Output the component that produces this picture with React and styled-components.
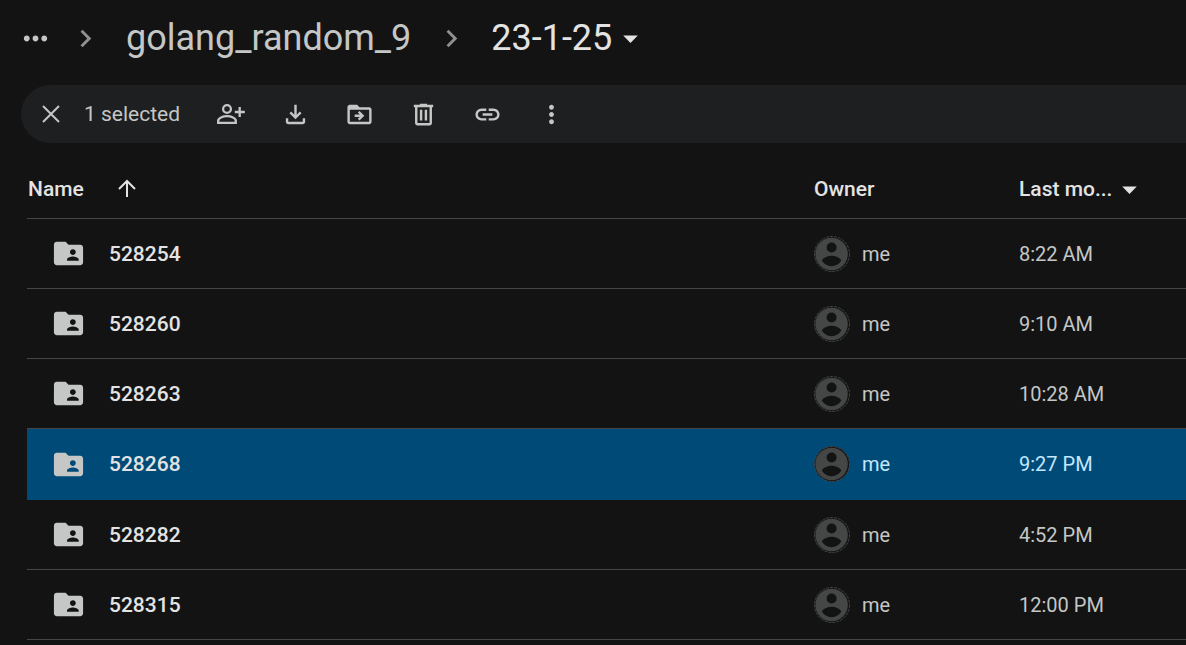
import React from 'react';
import styled, { createGlobalStyle } from 'styled-components';

const GlobalStyle = createGlobalStyle`
  *, *::before, *::after { box-sizing: border-box; }
  body {
    margin: 0;
    background: #131314;
    color: #c4c7c5;
    font-family: Roboto, "Liberation Sans", sans-serif;
  }
`;

const Page = styled.main`
  display: flex;
  flex-direction: column;
`;

const Breadcrumbs = styled.nav`
  display: flex;
  align-items: center;
  height: 76px;
  padding-left: 18px;
`;

const PlainButton = styled.button`
  display: inline-flex;
  align-items: center;
  padding: 0;
  border: 0;
  background: none;
  color: inherit;
  font: inherit;
  cursor: pointer;
`;

const MoreButton = styled(PlainButton)`
  margin-right: 15px;
`;

const Crumb = styled.a`
  padding: 0 23px;
  color: #c4c7c5;
  font-size: 36px;
  line-height: 44px;
  text-decoration: none;
`;

const CurrentCrumb = styled(PlainButton)`
  gap: 1px;
  padding-left: 22px;
  color: #e3e3e3;
  font-size: 36px;
  line-height: 44px;
`;

const Separator = styled.span`
  display: flex;
  color: #8e918f;
`;

const Toolbar = styled.section`
  display: flex;
  align-items: center;
  height: 58px;
  margin: 9px 0 0 21px;
  padding-left: 6px;
  border-radius: 29px 0 0 29px;
  background: #1e1f20;
`;

const ToolButton = styled(PlainButton)`
  justify-content: center;
  width: 48px;
  height: 48px;
  border-radius: 24px;
`;

const SelectionCount = styled.span`
  min-width: 98px;
  margin: 0 25px 0 9px;
  font-size: 21px;
  line-height: 28px;
`;

const Actions = styled.div`
  display: flex;
  gap: 16px;
`;

const TableArea = styled.section`
  margin: 17px 0 0 27px;
`;

const Table = styled.table`
  width: 100%;
  table-layout: fixed;
  border-spacing: 0;
`;

const HeadCell = styled.th`
  width: ${({ $width }) => $width || 'auto'};
  height: 59px;
  padding: 0;
  border-bottom: 1px solid #444746;
  color: #e3e3e3;
  font-size: 21px;
  font-weight: 500;
  line-height: 28px;
  text-align: left;
`;

const HeadContent = styled.div`
  display: flex;
  align-items: center;
  gap: 33px;
  padding-left: 1px;
`;

const Row = styled.tr`
  height: ${({ $selected }) => ($selected ? '71px' : '70px')};
  background: ${({ $selected }) => ($selected ? '#004a77' : 'transparent')};
  color: ${({ $selected }) => ($selected ? '#c2e7ff' : '#c4c7c5')};
`;

const Cell = styled.td`
  padding: 0;
  border-bottom: 1px solid ${({ $selected }) => ($selected ? '#004a77' : '#444746')};
  font-size: 20px;
  line-height: 28px;
`;

const NameContent = styled.div`
  display: flex;
  align-items: center;
  gap: 23px;
  padding-left: 24px;
  color: #c4c7c5;
`;

const FileName = styled.span`
  color: #e3e3e3;
  font-size: 21px;
  font-weight: 500;
`;

const OwnerContent = styled.div`
  display: flex;
  align-items: center;
  gap: 12px;
`;

const Svg = styled.svg`
  display: block;
  flex: none;
  width: ${({ $size }) => $size}px;
  height: ${({ $size }) => $size}px;
  fill: currentColor;
`;

const StrokeSvg = styled(Svg)`
  fill: none;
  stroke: currentColor;
  stroke-width: 2;
`;

const ICONS = {
  moreHoriz: 'M6 10c-1.1 0-2 .9-2 2s.9 2 2 2 2-.9 2-2-.9-2-2-2zm12 0c-1.1 0-2 .9-2 2s.9 2 2 2 2-.9 2-2-.9-2-2-2zm-6 0c-1.1 0-2 .9-2 2s.9 2 2 2 2-.9 2-2-.9-2-2-2z',
  moreVert: 'M12 8c1.1 0 2-.9 2-2s-.9-2-2-2-2 .9-2 2 .9 2 2 2zm0 2c-1.1 0-2 .9-2 2s.9 2 2 2 2-.9 2-2-.9-2-2-2zm0 6c-1.1 0-2 .9-2 2s.9 2 2 2 2-.9 2-2-.9-2-2-2z',
  chevron: 'M10 6L8.59 7.41 13.17 12l-4.58 4.59L10 18l6-6z',
  caret: 'M7 10l5 5 5-5z',
  download: 'M12 16l-5-5 1.4-1.45 2.6 2.6V4h2v8.15l2.6-2.6L17 11zm-6 4q-.825 0-1.4125-.5875Q4 18.825 4 18v-3h2v3h12v-3h2v3q0 .825-.5875 1.4125Q18.825 20 18 20z',
  move: 'M4 20q-.825 0-1.4-.6T2 18V6q0-.8.6-1.4T4 4h6l2 2h8q.8 0 1.4.6T22 8v10q0 .8-.6 1.4T20 20zM4 8v10h16V8zM12 17l4-4-4-4-1.4 1.4 1.6 1.6H8v2h4.2l-1.6 1.6z',
  trash: 'M7 21q-.825 0-1.4-.6T5 19V6H4V4h5V3h6v1h5v2h-1v13q0 .8-.6 1.4T17 21zM17 6H7v13h10zM9 17h2V8H9zm4 0h2V8h-2z',
  link: 'M11 17H7q-2.075 0-3.5375-1.4625Q2 14.075 2 12t1.4625-3.5375Q4.925 7 7 7h4v2H7q-1.25 0-2.125.875T4 12q0 1.25.875 2.125T7 15h4zm-3-4v-2h8v2zm5 4v-2h4q1.25 0 2.125-.875T20 12q0-1.25-.875-2.125T17 9h-4V7h4q2.075 0 3.5375 1.4625Q22 9.925 22 12t-1.4625 3.5375Q19.075 17 17 17z',
  sharedFolder: 'M20 6h-8l-2-2H4c-1.1 0-1.99.9-1.99 2L2 18c0 1.1.9 2 2 2h16c1.1 0 2-.9 2-2V8c0-1.1-.9-2-2-2zm-5 3c1.1 0 2 .9 2 2s-.9 2-2 2-2-.9-2-2 .9-2 2-2zm4 8h-8v-1c0-1.33 2.67-2 4-2s4 .67 4 2v1z',
};

function Icon({ name, size }) {
  return (
    <Svg $size={size} viewBox="0 0 24 24" fillRule="evenodd" aria-hidden="true">
      <path d={ICONS[name]} />
    </Svg>
  );
}

function CloseIcon() {
  return (
    <StrokeSvg $size={20} viewBox="0 0 20 20" aria-hidden="true">
      <path d="M2 2l16 16M18 2L2 18" />
    </StrokeSvg>
  );
}

function ArrowUpIcon() {
  return (
    <StrokeSvg $size={20} viewBox="0 0 20 20" aria-hidden="true">
      <path d="M10 18V2M2 10l8-8 8 8" />
    </StrokeSvg>
  );
}

function PersonAddIcon() {
  return (
    <StrokeSvg $size={30} viewBox="0 0 30 30" aria-hidden="true">
      <circle cx="11" cy="10" r="3.9" strokeWidth="2.3" />
      <path strokeWidth="2.3" d="M2.2 23.9v-2.2c0-2.7 4.6-4.5 8.8-4.5s8.8 1.8 8.8 4.5v2.2z" />
      <path strokeWidth="2.3" d="M23.7 8v10M18.8 13h10" />
    </StrokeSvg>
  );
}

function Avatar() {
  return (
    <Svg $size={36} viewBox="0 0 36 36" aria-hidden="true">
      <circle cx="18" cy="18" r="17.5" fill="#131314" stroke="#444746" strokeWidth="1" strokeDasharray="3 1" />
      <circle cx="17.6" cy="18" r="16.2" fill="#444746" />
      <circle cx="17.6" cy="11.5" r="5" fill="#131314" />
      <path d="M7.8 24.3c2.2-3 5.8-4.5 9.8-4.5s7.600 1.500 9.800 4.500c-2 3.500-5.700 5.900-9.800 5.900s-7.800-2.400-9.800-5.900z" fill="#131314" />
    </Svg>
  );
}

const files = [
  { name: '528254', modified: '8:22 AM' },
  { name: '528260', modified: '9:10 AM' },
  { name: '528263', modified: '10:28 AM' },
  { name: '528268', modified: '9:27 PM', selected: true },
  { name: '528282', modified: '4:52 PM' },
  { name: '528315', modified: '12:00 PM' },
];

const actions = [
  { label: 'Download', icon: 'download' },
  { label: 'Move', icon: 'move' },
  { label: 'Remove', icon: 'trash' },
  { label: 'Get link', icon: 'link' },
  { label: 'More actions', icon: 'moreVert' },
];

function FileRow({ file }) {
  const { name, modified, selected } = file;
  return (
    <Row $selected={selected} aria-selected={!!selected}>
      <Cell $selected={selected}>
        <NameContent>
          <Icon name="sharedFolder" size={35} />
          <FileName>{name}</FileName>
        </NameContent>
      </Cell>
      <Cell $selected={selected}>
        <OwnerContent>
          <Avatar />
          <span>me</span>
        </OwnerContent>
      </Cell>
      <Cell $selected={selected}>{modified}</Cell>
    </Row>
  );
}

export default function App() {
  return (
    <Page>
      <GlobalStyle />
      <Breadcrumbs aria-label="Folder path">
        <MoreButton type="button" aria-label="Show path">
          <Icon name="moreHoriz" size={35} />
        </MoreButton>
        <Separator><Icon name="chevron" size={35} /></Separator>
        <Crumb href="#golang_random_9">golang_random_9</Crumb>
        <Separator><Icon name="chevron" size={35} /></Separator>
        <CurrentCrumb type="button">
          23-1-25
          <Icon name="caret" size={35} />
        </CurrentCrumb>
      </Breadcrumbs>

      <Toolbar aria-label="Selection actions">
        <ToolButton type="button" aria-label="Clear selection"><CloseIcon /></ToolButton>
        <SelectionCount>1 selected</SelectionCount>
        <Actions>
          <ToolButton type="button" aria-label="Share"><PersonAddIcon /></ToolButton>
          {actions.map(({ label, icon }) => (
            <ToolButton key={label} type="button" aria-label={label}>
              <Icon name={icon} size={29} />
            </ToolButton>
          ))}
        </Actions>
      </Toolbar>

      <TableArea>
        <Table>
          <thead>
            <tr>
              <HeadCell scope="col">
                <HeadContent>
                  <PlainButton type="button">Name</PlainButton>
                  <PlainButton type="button" aria-label="Reverse sort direction"><ArrowUpIcon /></PlainButton>
                </HeadContent>
              </HeadCell>
              <HeadCell scope="col" $width="205px">Owner</HeadCell>
              <HeadCell scope="col" $width="167px">
                <PlainButton type="button">
                  Last mo...
                  <Icon name="caret" size={35} />
                </PlainButton>
              </HeadCell>
            </tr>
          </thead>
          <tbody>
            {files.map((file) => <FileRow key={file.name} file={file} />)}
          </tbody>
        </Table>
      </TableArea>
    </Page>
  );
}
